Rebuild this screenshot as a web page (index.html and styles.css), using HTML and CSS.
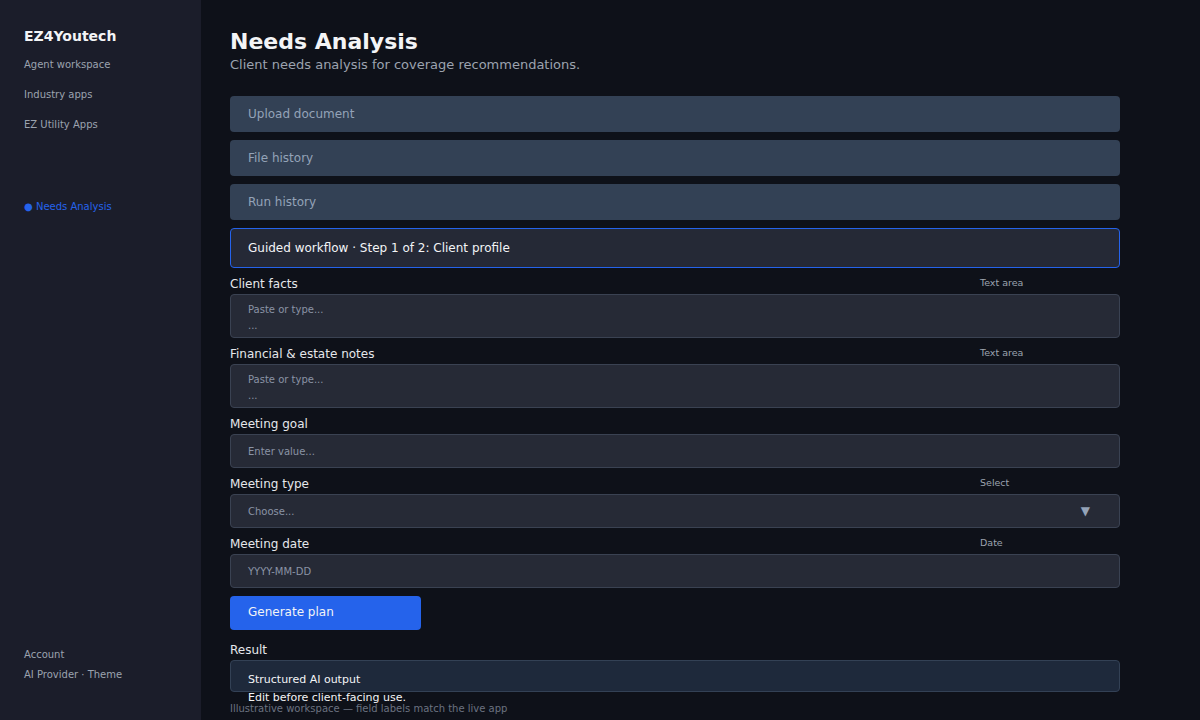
FILE: index.html
```html
<!DOCTYPE html>
<html lang="en">
<head>
    <meta charset="UTF-8">
    <meta name="viewport" content="width=device-width, initial-scale=1.0">
    <title>Needs Analysis - EZ4Youtech</title>
    <link rel="stylesheet" href="styles.css">
</head>
<body>
    <div class="app">
        <!-- Sidebar -->
        <aside class="sidebar">
            <div class="brand">EZ4Youtech</div>
            <nav class="side-nav">
                <a class="side-link">Agent workspace</a>
                <a class="side-link">Industry apps</a>
                <a class="side-link">EZ Utility Apps</a>
            </nav>
            <div class="side-current"><span class="dot">●</span> Needs Analysis</div>
            <div class="side-bottom">
                <a class="side-link">Account</a>
                <a class="side-link">AI Provider · Theme</a>
            </div>
        </aside>

        <!-- Main workspace -->
        <main class="main">
            <div class="content">
                <h1 class="page-title">Needs Analysis</h1>
                <p class="page-sub">Client needs analysis for coverage recommendations.</p>

                <div class="panel-list">
                    <div class="panel">Upload document</div>
                    <div class="panel">File history</div>
                    <div class="panel">Run history</div>
                    <div class="panel panel-step">Guided workflow · Step 1 of 2: Client profile</div>
                </div>

                <div class="field">
                    <div class="field-head">
                        <label>Client facts</label>
                        <span class="field-kind">Text area</span>
                    </div>
                    <div class="box box-area">Paste or type...<br>...</div>
                </div>

                <div class="field">
                    <div class="field-head">
                        <label>Financial &amp; estate notes</label>
                        <span class="field-kind">Text area</span>
                    </div>
                    <div class="box box-area">Paste or type...<br>...</div>
                </div>

                <div class="field">
                    <div class="field-head">
                        <label>Meeting goal</label>
                    </div>
                    <div class="box box-input">Enter value...</div>
                </div>

                <div class="field">
                    <div class="field-head">
                        <label>Meeting type</label>
                        <span class="field-kind">Select</span>
                    </div>
                    <div class="box box-input box-select">
                        <span>Choose...</span>
                        <span class="caret">▼</span>
                    </div>
                </div>

                <div class="field">
                    <div class="field-head">
                        <label>Meeting date</label>
                        <span class="field-kind">Date</span>
                    </div>
                    <div class="box box-input">YYYY-MM-DD</div>
                </div>

                <button class="btn-primary">Generate plan</button>

                <div class="field field-result">
                    <div class="field-head">
                        <label>Result</label>
                    </div>
                    <div class="result-box">Structured AI output<br>Edit before client-facing use.</div>
                </div>

                <p class="footnote">Illustrative workspace — field labels match the live app</p>
            </div>
        </main>
    </div>
</body>
</html>
```

FILE: styles.css
```css
:root {
    --sidebar-bg: #1b1d2a;
    --main-bg: #0e1119;
    --panel-bg: #334155;
    --field-bg: #262a36;
    --field-border: #3a4252;
    --accent: #2563eb;
    --text: #f1f2f5;
    --label: #e5e7eb;
    --muted: #94a3b8;
    --muted-2: #9ca3af;
}

* {
    box-sizing: border-box;
    margin: 0;
    padding: 0;
}

body {
    font-family: "DejaVu Sans", "Liberation Sans", sans-serif;
    background-color: var(--main-bg);
    color: var(--text);
    height: 720px;
    overflow: hidden;
}

.app {
    display: flex;
    height: 720px;
}

/* Sidebar */
.sidebar {
    width: 201px;
    flex-shrink: 0;
    background-color: var(--sidebar-bg);
    display: flex;
    flex-direction: column;
    padding: 24px 24px 37px;
}

.brand {
    font-size: 14px;
    font-weight: bold;
    line-height: 25px;
    color: #f3f4f6;
}

.side-nav {
    display: flex;
    flex-direction: column;
    gap: 14px;
    margin-top: 8px;
}

.side-link {
    font-size: 10px;
    line-height: 16px;
    color: var(--muted-2);
    text-decoration: none;
}

.side-current {
    margin-top: 66px;
    font-size: 10px;
    line-height: 16px;
    color: var(--accent);
}

.side-current .dot {
    font-size: 10px;
}

.side-bottom {
    margin-top: auto;
    display: flex;
    flex-direction: column;
    gap: 4px;
}

/* Main */
.main {
    flex: 1;
    padding: 28px 29px 0;
}

.content {
    width: 890px;
}

.page-title {
    font-size: 22px;
    line-height: 28px;
    font-weight: bold;
    color: #f3f4f6;
}

.page-sub {
    font-size: 13px;
    line-height: 18px;
    color: var(--muted-2);
    margin-bottom: 22px;
}

.panel-list {
    display: flex;
    flex-direction: column;
    gap: 8px;
}

.panel {
    height: 36px;
    display: flex;
    align-items: center;
    padding: 0 18px;
    background-color: var(--panel-bg);
    border-radius: 4px;
    font-size: 12px;
    color: var(--muted);
}

.panel-step {
    height: 40px;
    background-color: #252936;
    border: 1px solid var(--accent);
    padding: 0 17px;
    color: #f3f4f6;
}

/* Fields */
.field {
    margin-top: 8px;
}

.field-head {
    display: flex;
    align-items: center;
    height: 16px;
    margin-bottom: 2px;
}

.field-head label {
    flex: 1;
    font-size: 12px;
    line-height: 16px;
    color: var(--label);
}

.field-kind {
    width: 140px;
    font-size: 9.5px;
    color: var(--muted-2);
    margin-top: -3px;
}

.box {
    background-color: var(--field-bg);
    border: 1px solid var(--field-border);
    border-radius: 4px;
    padding: 0 17px;
    font-size: 10px;
    color: #8a93a5;
}

.box-area {
    height: 44px;
    padding-top: 7px;
    line-height: 16px;
}

.box-input {
    height: 34px;
    display: flex;
    align-items: center;
}

.box-select {
    justify-content: space-between;
    padding-right: 29px;
}

.caret {
    font-size: 12px;
    color: var(--muted);
}

.btn-primary {
    display: block;
    margin-top: 8px;
    width: 191px;
    height: 34px;
    border: none;
    border-radius: 4px;
    background-color: var(--accent);
    color: #f3f4f6;
    font-family: inherit;
    font-size: 12px;
    text-align: left;
    padding: 0 18px 2px;
}

.field-result {
    margin-top: 12px;
}

.result-box {
    height: 32px;
    background-color: #1e293b;
    border: 1px solid var(--panel-bg);
    border-radius: 4px;
    padding: 10px 17px 0;
    font-size: 11px;
    line-height: 18px;
    color: #f3f4f6;
}

.footnote {
    margin-top: 9px;
    font-size: 10px;
    line-height: 16px;
    color: #6b7280;
}
```
